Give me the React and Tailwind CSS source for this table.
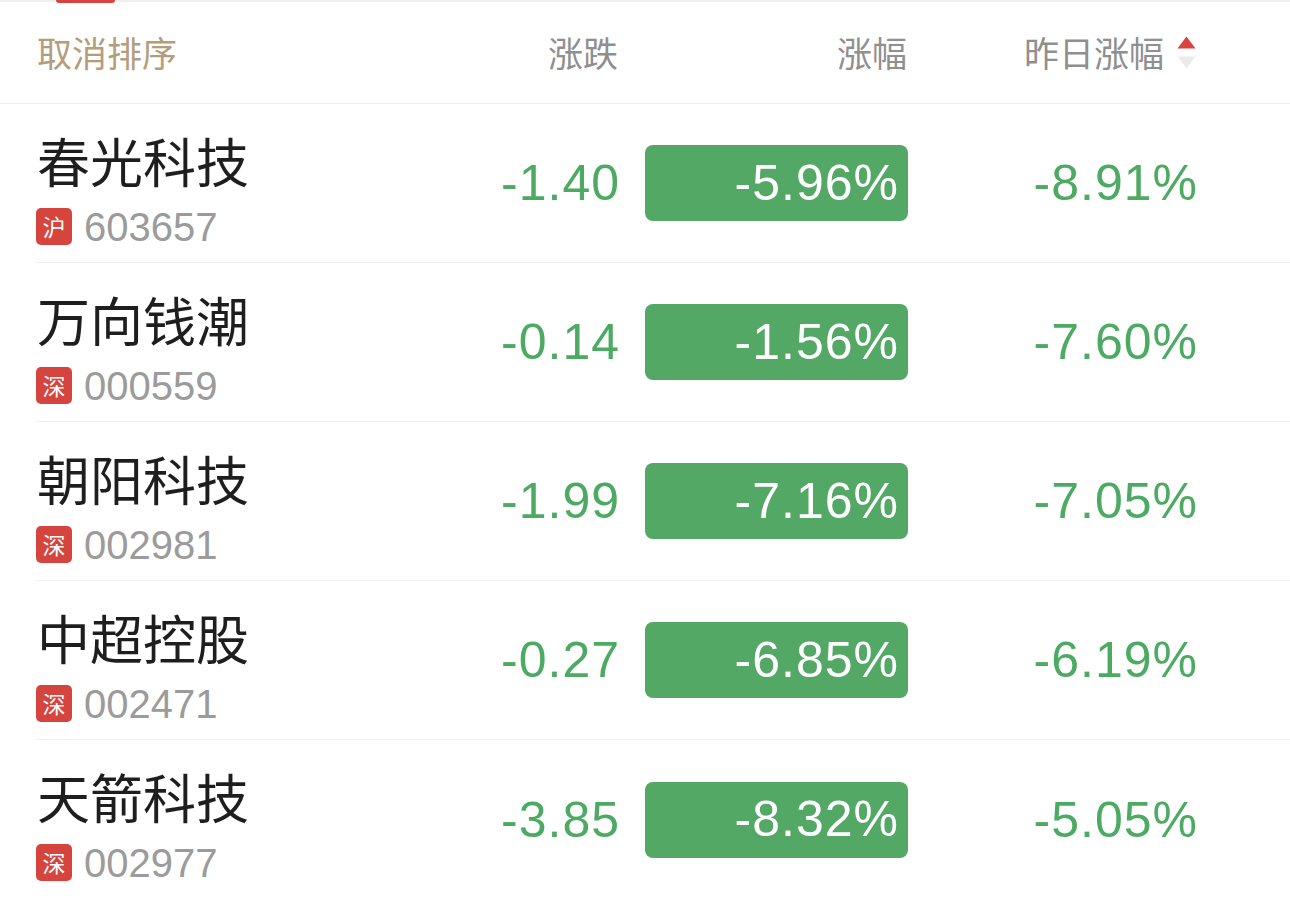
const rows = [
  { name: '春光科技', market: '沪', code: '603657', change: '-1.40', pct: '-5.96%', prev: '-8.91%' },
  { name: '万向钱潮', market: '深', code: '000559', change: '-0.14', pct: '-1.56%', prev: '-7.60%' },
  { name: '朝阳科技', market: '深', code: '002981', change: '-1.99', pct: '-7.16%', prev: '-7.05%' },
  { name: '中超控股', market: '深', code: '002471', change: '-0.27', pct: '-6.85%', prev: '-6.19%' },
  { name: '天箭科技', market: '深', code: '002977', change: '-3.85', pct: '-8.32%', prev: '-5.05%' },
];

const CJK = "font-['Noto_Sans_CJK_SC',sans-serif]";
const NUM = "font-['Liberation_Sans',sans-serif]";

const SortArrows = () => (
  <div className="flex flex-col items-center gap-[7px]">
    <svg width="19" height="13" viewBox="0 0 19 13">
      <path d="M9.5 0.5 L18.5 12.5 L0.5 12.5 Z" fill="#d9423f" />
    </svg>
    <svg width="19" height="13" viewBox="0 0 19 13">
      <path d="M0.5 0.5 L18.5 0.5 L9.5 12.5 Z" fill="#ebebeb" />
    </svg>
  </div>
);

const StockRow = ({ row, last }) => (
  <div className={`ml-[36px] h-[159px] flex pr-[92px] ${last ? '' : 'border-b border-[#efefef]'}`}>
    <div className="flex-1 flex flex-col">
      <div className={`${CJK} mt-[28px] h-[56px] leading-[56px] text-[53px] text-[#1e1e1e] pl-[1px]`}>
        {row.name}
      </div>
      <div className="mt-[20px] flex items-center h-[37px]">
        <div className={`${CJK} w-[36px] h-[37px] rounded-[5px] bg-[#d6443e] text-white text-[23px] leading-[37px] text-center`}>
          {row.market}
        </div>
        <span className="ml-[12px] font-['Liberation_Sans',sans-serif] text-[40px] leading-none text-[#9b9b9b]">
          {row.code}
        </span>
      </div>
    </div>
    <div className="flex items-center">
      <div className={`${NUM} text-[50px] leading-none tracking-[1px] text-[#4caa62] text-right mr-[25px]`}>
        {row.change}
      </div>
      <div className={`${NUM} w-[263px] h-[76px] rounded-[8px] bg-[#54a866] text-white text-[50px] tracking-[1px] flex items-center justify-end pr-[9px]`}>
        {row.pct}
      </div>
      <div className={`${NUM} w-[290px] text-right text-[50px] leading-none tracking-[1px] text-[#4caa62]`}>
        {row.prev}
      </div>
    </div>
  </div>
);

export default function App() {
  return (
    <div className="w-[1290px] h-[898px] bg-white overflow-hidden">
      <div className="h-[2px] bg-[#efefef] flex">
        <div className="ml-[56px] w-[59px] h-[3px] rounded-b-[3px] bg-[#d8423d]" />
      </div>
      <div className={`${CJK} h-[102px] border-b border-[#eeeeee] flex items-center pl-[37px] pr-[94px] text-[35px] text-[#8f8f8f]`}>
        <div className="flex-1 text-[#b49d7c]">取消排序</div>
        <div className="text-right mr-[26px]">涨跌</div>
        <div className="w-[263px] text-right">涨幅</div>
        <div className="w-[289px] flex items-center justify-end gap-[13px]">
          <span>昨日涨幅</span>
          <SortArrows />
        </div>
      </div>
      {rows.map((row, i) => (
        <StockRow key={row.code} row={row} last={i === rows.length - 1} />
      ))}
    </div>
  );
}
